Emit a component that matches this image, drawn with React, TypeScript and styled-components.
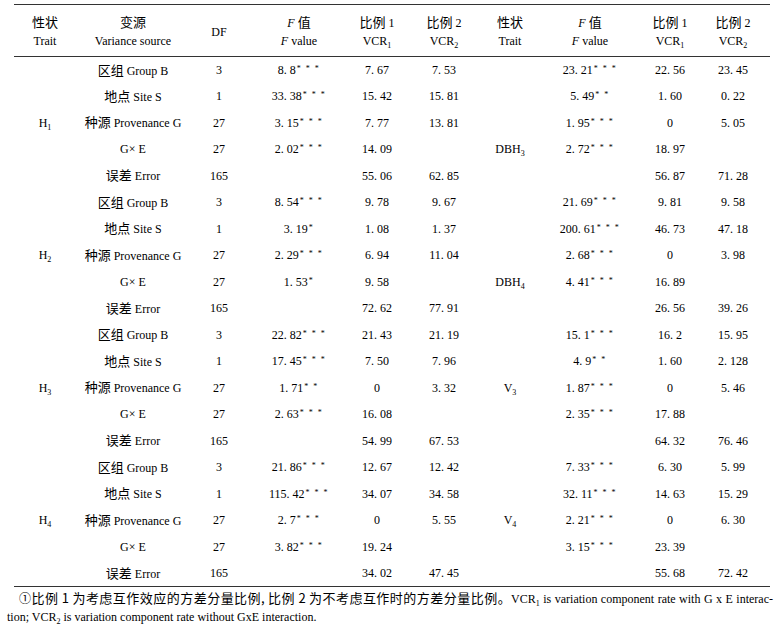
import React from 'react';
import styled, { createGlobalStyle } from 'styled-components';

const GlobalStyle = createGlobalStyle`
  html, body { margin: 0; padding: 0; background: #ffffff; }
  body {
    font-family: "Liberation Serif", "Noto Sans CJK SC", serif;
    color: #000000;
  }
`;

const Page = styled.div`
  width: 778px;
  box-sizing: border-box;
  padding: 4px 0 0 7px;
`;

const Table = styled.table`
  margin-left: 7px;
  width: 756px;
  border-collapse: collapse;
  table-layout: fixed;
  border-top: 1px solid #333333;
  border-bottom: 1px solid #333333;
  font-size: 12px;
`;

const HeadRow = styled.tr`
  height: 52px;
  border-bottom: 1px solid #333333;
`;

const Th = styled.th`
  padding: 3px 0 0 0;
  font-weight: normal;
  text-align: center;
  vertical-align: middle;
  line-height: 18px;
  white-space: nowrap;
`;

const Row = styled.tr`
  height: 26.5px;
`;

const Td = styled.td`
  padding: 0;
  text-align: center;
  vertical-align: middle;
  line-height: 14px;
  white-space: nowrap;
`;

const Zh = styled.span`
  font-family: "Noto Sans CJK SC", sans-serif;
  font-size: 13px;
  line-height: 14px;
`;

const Ital = styled.i`
  font-style: italic;
`;

const Sub = styled.sub`
  font-size: 8px;
  line-height: 0;
  vertical-align: -3px;
`;

const Stars = styled.sup`
  font-size: 8px;
  line-height: 0;
  vertical-align: 3px;
  letter-spacing: 1.5px;
  margin-left: 1px;
`;

const Note = styled.div`
  width: 766px;
  margin-top: 3px;
  font-size: 12px;
  line-height: 18px;
`;

const NoteFirst = styled.div`
  padding-left: 12px;
  text-align: justify;
  text-align-last: justify;
`;

const NoteSecond = styled.div`
  text-align: left;
`;

type Trait = [string, string];
type FVal = [string, string] | null;

interface RowData {
  tl?: Trait;
  zh: string;
  en: string;
  df: string;
  f: FVal;
  a: string;
  b: string;
  tr?: Trait;
  fr: FVal;
  c: string;
  d: string;
}

const group = (
  tl: Trait,
  tr: Trait,
  trRow: number,
  vals: Array<[FVal, string, string, FVal, string, string]>
): RowData[] => {
  const src: Array<[string, string, string]> = [
    ['区组', 'Group B', '3'],
    ['地点', 'Site S', '1'],
    ['种源', 'Provenance G', '27'],
    ['', 'G× E', '27'],
    ['误差', 'Error', '165'],
  ];
  return vals.map((v, i) => ({
    tl: i === 2 ? tl : undefined,
    tr: i === trRow ? tr : undefined,
    zh: src[i][0],
    en: src[i][1],
    df: src[i][2],
    f: v[0],
    a: v[1],
    b: v[2],
    fr: v[3],
    c: v[4],
    d: v[5],
  }));
};

const s3 = '* * *';
const s2 = '* *';
const s1 = '*';

const rows: RowData[] = [
  ...group(['H', '1'], ['DBH', '3'], 3, [
    [['8. 8', s3], '7. 67', '7. 53', ['23. 21', s3], '22. 56', '23. 45'],
    [['33. 38', s3], '15. 42', '15. 81', ['5. 49', s2], '1. 60', '0. 22'],
    [['3. 15', s3], '7. 77', '13. 81', ['1. 95', s3], '0', '5. 05'],
    [['2. 02', s3], '14. 09', '', ['2. 72', s3], '18. 97', ''],
    [null, '55. 06', '62. 85', null, '56. 87', '71. 28'],
  ]),
  ...group(['H', '2'], ['DBH', '4'], 3, [
    [['8. 54', s3], '9. 78', '9. 67', ['21. 69', s3], '9. 81', '9. 58'],
    [['3. 19', s1], '1. 08', '1. 37', ['200. 61', s3], '46. 73', '47. 18'],
    [['2. 29', s3], '6. 94', '11. 04', ['2. 68', s3], '0', '3. 98'],
    [['1. 53', s1], '9. 58', '', ['4. 41', s3], '16. 89', ''],
    [null, '72. 62', '77. 91', null, '26. 56', '39. 26'],
  ]),
  ...group(['H', '3'], ['V', '3'], 2, [
    [['22. 82', s3], '21. 43', '21. 19', ['15. 1', s3], '16. 2', '15. 95'],
    [['17. 45', s3], '7. 50', '7. 96', ['4. 9', s2], '1. 60', '2. 128'],
    [['1. 71', s2], '0', '3. 32', ['1. 87', s3], '0', '5. 46'],
    [['2. 63', s3], '16. 08', '', ['2. 35', s3], '17. 88', ''],
    [null, '54. 99', '67. 53', null, '64. 32', '76. 46'],
  ]),
  ...group(['H', '4'], ['V', '4'], 2, [
    [['21. 86', s3], '12. 67', '12. 42', ['7. 33', s3], '6. 30', '5. 99'],
    [['115. 42', s3], '34. 07', '34. 58', ['32. 11', s3], '14. 63', '15. 29'],
    [['2. 7', s3], '0', '5. 55', ['2. 21', s3], '0', '6. 30'],
    [['3. 82', s3], '19. 24', '', ['3. 15', s3], '23. 39', ''],
    [null, '34. 02', '47. 45', null, '55. 68', '72. 42'],
  ]),
];

const colWidths = [62, 114, 58, 102, 54, 80, 52, 108, 52, 74];

const TraitCell: React.FC<{ t?: Trait }> = ({ t }) => (
  <Td>
    {t ? (
      <>
        {t[0]}
        <Sub>{t[1]}</Sub>
      </>
    ) : null}
  </Td>
);

const FCell: React.FC<{ f: FVal }> = ({ f }) => (
  <Td>
    {f ? (
      <>
        {f[0]}
        <Stars>{f[1]}</Stars>
      </>
    ) : null}
  </Td>
);

const RatioHead: React.FC<{ n: string }> = ({ n }) => (
  <Th>
    <Zh>比例</Zh> {n}
    <br />
    VCR<Sub>{n}</Sub>
  </Th>
);

const FHead: React.FC = () => (
  <Th>
    <Ital>F</Ital> <Zh>值</Zh>
    <br />
    <Ital>F</Ital> value
  </Th>
);

const TraitHead: React.FC = () => (
  <Th>
    <Zh>性状</Zh>
    <br />
    Trait
  </Th>
);

export default function App() {
  return (
    <Page>
      <GlobalStyle />
      <Table>
        <colgroup>
          {colWidths.map((w, i) => (
            <col key={i} style={{ width: w }} />
          ))}
        </colgroup>
        <thead>
          <HeadRow>
            <TraitHead />
            <Th>
              <Zh>变源</Zh>
              <br />
              Variance source
            </Th>
            <Th>DF</Th>
            <FHead />
            <RatioHead n="1" />
            <RatioHead n="2" />
            <TraitHead />
            <FHead />
            <RatioHead n="1" />
            <RatioHead n="2" />
          </HeadRow>
        </thead>
        <tbody>
          {rows.map((r, i) => (
            <Row key={i}>
              <TraitCell t={r.tl} />
              <Td>
                {r.zh ? <Zh>{r.zh}</Zh> : null}
                {r.zh ? ' ' : ''}
                {r.en}
              </Td>
              <Td>{r.df}</Td>
              <FCell f={r.f} />
              <Td>{r.a}</Td>
              <Td>{r.b}</Td>
              <TraitCell t={r.tr} />
              <FCell f={r.fr} />
              <Td>{r.c}</Td>
              <Td>{r.d}</Td>
            </Row>
          ))}
        </tbody>
      </Table>
      <Note>
        <NoteFirst>
          ①<Zh>比例 1 为考虑互作效应的方差分量比例, 比例 2 为不考虑互作时的方差分量比例。</Zh>VCR<Sub>1</Sub> is
          variation component rate with G x E interac-
        </NoteFirst>
        <NoteSecond>
          tion; VCR<Sub>2</Sub> is variation component rate without GxE interaction.
        </NoteSecond>
      </Note>
    </Page>
  );
}
